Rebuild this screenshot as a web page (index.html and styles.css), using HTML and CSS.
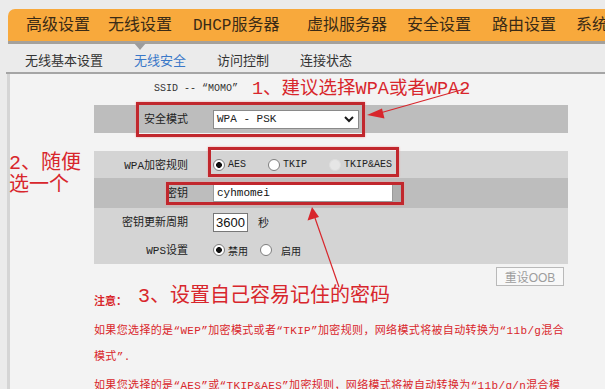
FILE: index.html
```html
<!DOCTYPE html>
<html>

<head>
  <title>无线安全</title>
  <link rel="stylesheet" href="styles.css">
</head>

<body>
 <div class="page">
  <div class="topnav">
    <span class="nav-item"><span>高级设置</span></span>
    <span class="nav-item"><span class="active">无线设置</span></span>
    <span class="nav-item"><span>DHCP服务器</span></span>
    <span class="nav-item"><span>虚拟服务器</span></span>
    <span class="nav-item"><span>安全设置</span></span>
    <span class="nav-item"><span>路由设置</span></span>
    <span class="nav-item"><span>系统工具</span></span>
  </div>
  <div class="subnav">
    <span>无线基本设置</span>
    <span class="current">无线安全</span>
    <span>访问控制</span>
    <span>连接状态</span>
  </div>

  <div class="content">
    <div class="ssid">SSID -- “MOMO”</div>
    <div class="form">
      <div class="field-row dark">
        <div class="label">安全模式</div>
        <div class="value">
          <div class="select">
            <span>WPA - PSK</span>
            <svg width="10" height="7" viewBox="0 0 10 7"><path d="M1 1 L5 5 L9 1" fill="none" stroke="#1a1a1a" stroke-width="2"/></svg>
          </div>
        </div>
      </div>
      <div class="field-row light first">
        <div class="label">WPA加密规则</div>
        <div class="value">
          <span class="radio on"><i></i>AES</span>
          <span class="radio"><i></i>TKIP</span>
          <span class="radio off"><i></i>TKIP&amp;AES</span>
        </div>
      </div>
      <div class="field-row dark tall">
        <div class="label">密钥</div>
        <div class="value">
          <input class="text-input key" type="text" value="cyhmomei" />
          <span class="key-end"></span>
        </div>
      </div>
      <div class="field-row light">
        <div class="label">密钥更新周期</div>
        <div class="value">
          <input class="text-input period" type="text" value="3600" />
          <span class="unit">秒</span>
        </div>
      </div>
      <div class="field-row light">
        <div class="label">WPS设置</div>
        <div class="value">
          <span class="radio on"><i></i>禁用</span>
          <span class="radio wps-on"><i></i>启用</span>
        </div>
      </div>
      <div class="btn-row">
        <button type="button" class="btn-oob">重设OOB</button>
      </div>
    </div>

    <div class="notice">
      <div class="notice-title">注意：</div>
      <p class="notice-text">如果您选择的是“WEP”加密模式或者“TKIP”加密规则，网络模式将被自动转换为“11b/g混合模式”.</p>
      <p class="notice-text">如果您选择的是“AES”或“TKIP&amp;AES”加密规则，网络模式将被自动转换为“11b/g/n混合模式”.</p>
    </div>
  </div>

  <!-- annotations drawn over the screenshot -->
  <div class="mark mark-mode"></div>
  <div class="mark mark-rule"></div>
  <div class="mark mark-key"></div>
  <div class="note note-1">1、建议选择WPA或者WPA2</div>
  <div class="note note-2">2、随便<br>选一个</div>
  <div class="note note-3">3、设置自己容易记住的密码</div>
  <svg class="arrows" width="605" height="389" viewBox="0 0 605 389">
    <line x1="468" y1="88" x2="380" y2="113" stroke="#d8262c" stroke-width="1.2"/>
    <polygon points="367,115 382,108.5 384.5,118.5" fill="#d8262c"/>
    <line x1="339" y1="287" x2="315" y2="218" stroke="#d8262c" stroke-width="1.2"/>
    <polygon points="312,207 307.5,220.5 319,217" fill="#d8262c"/>
  </svg>
 </div>
</body>

</html>
```

FILE: styles.css
```css
body {
    margin: 0;
    background-color: #ebebeb;
    font-family: "Liberation Mono", "Noto Sans CJK SC", monospace;
    color: #222;
}
.page {
    position: relative;
    width: 605px;
    height: 389px;
    overflow: hidden;
}
.topnav {
    display: grid;
    grid-template-columns: 82px 85px 114px 100px 85px 84px 120px;
    margin: 9px 0 0 8px;
    padding: 2px 0 0 18px;
    height: 30px;
    line-height: 30px;
    background-color: #f8a93c;
    border-bottom: 3px solid #a5a19b;
    border-radius: 7px 0 0 0;
    font-size: 16px;
    color: #3a2b16;
    white-space: nowrap;
}
.nav-item > span {
    position: relative;
    display: inline-block;
}
.nav-item > .active::after {
    content: "";
    position: absolute;
    left: 50%;
    top: 32px;
    margin-left: -6px;
    border-left: 6px solid transparent;
    border-right: 6px solid transparent;
    border-top: 7px solid #9c9c9c;
}
.subnav {
    display: flex;
    gap: 31px;
    margin-left: 6px;
    padding: 3px 0 0 19px;
    height: 25px;
    line-height: 25px;
    font-family: "Noto Sans CJK SC", sans-serif;
    font-size: 13px;
    color: #333;
    border-bottom: 2px solid #a5a5a5;
}
.subnav .current {
    color: #3a78c8;
}
.content {
    margin-left: 7px;
    height: 320px;
    padding: 7px 0 0 84px;
    background-color: #f3f3f3;
    border-left: 3px solid #d5d5d5;
}
.ssid {
    margin-left: 60px;
    height: 16px;
    line-height: 16px;
    font-size: 10px;
    color: #333;
}
.form {
    width: 474px;
    margin-top: 8px;
}
.field-row {
    display: flex;
    align-items: center;
    height: 28px;
    font-size: 11px;
}
.field-row.dark {
    background-color: #bdbdbd;
}
.field-row.light {
    background-color: #d4d4d4;
}
.field-row.first {
    margin-top: 18px;
    height: 27px;
}
.field-row.tall {
    height: 30px;
}
.field-row .label {
    width: 94px;
    text-align: right;
    padding-bottom: 2px;
}
.field-row .value {
    display: flex;
    align-items: center;
    margin-left: 25px;
}
.select {
    display: flex;
    align-items: center;
    justify-content: space-between;
    box-sizing: border-box;
    width: 146px;
    height: 19px;
    padding: 0 4px 0 3px;
    background-color: #fff;
    border: 1px solid #8a8a8a;
    font-size: 11px;
}
.text-input {
    box-sizing: border-box;
    margin: 0;
    padding: 0 3px;
    height: 18px;
    border: 1px solid #9a9a9a;
    background-color: #fff;
    outline: none;
    font-family: "Liberation Mono", monospace;
    font-size: 11px;
    color: #111;
}
.text-input.key {
    width: 180px;
}
.key-end {
    width: 8px;
    height: 18px;
    background-color: #aeaeae;
}
.text-input.period {
    width: 35px;
    height: 19px;
    padding: 0 2px;
    border-color: #777;
    font-family: "Liberation Sans", sans-serif;
    font-size: 13px;
}
.unit {
    margin-left: 10px;
    font-family: "Noto Sans CJK SC", sans-serif;
}
.radio {
    display: inline-flex;
    align-items: center;
    gap: 3px;
    margin-right: 22px;
    font-size: 10px;
}
.radio i {
    display: inline-block;
    box-sizing: border-box;
    width: 12px;
    height: 12px;
    border: 1px solid #7d7d7d;
    border-radius: 50%;
    background-color: #fff;
}
.radio.on i {
    background: radial-gradient(circle, #111 0, #111 2.6px, #fff 3.2px);
}
.radio.off i {
    border-color: #dedede;
    background-color: #e6e6e6;
}
.radio.wps-on {
    gap: 9px;
    margin-left: -10px;
}
.btn-row {
    display: flex;
    justify-content: flex-end;
    padding: 3px 4px 0 0;
}
.btn-oob {
    width: 68px;
    height: 19px;
    margin: 0;
    padding: 0;
    background-color: #f8f8f8;
    border: 1px solid #b9b9b9;
    font-family: "Liberation Sans", "Noto Sans CJK SC", sans-serif;
    font-size: 12px;
    color: #9d9d9d;
}
.notice {
    width: 490px;
    margin-top: 3px;
    color: #d9262b;
    font-size: 11px;
}
.notice-title {
    height: 26px;
    line-height: 26px;
    font-weight: bold;
}
.notice-text {
    width: 478px;
    margin: 3px 0 0 0;
    line-height: 26px;
    letter-spacing: .35px;
}

.mark {
    position: absolute;
    border: 3px solid #c1272d;
    box-shadow: 0 0 2px #f0a0a0;
}
.mark-mode {
    left: 136px;
    top: 102px;
    width: 223px;
    height: 29px;
}
.mark-rule {
    left: 208px;
    top: 147px;
    width: 185px;
    height: 24px;
}
.mark-key {
    left: 166px;
    top: 182px;
    width: 232px;
    height: 17px;
}
.note {
    position: absolute;
    color: #d8262c;
    font-family: "Liberation Mono", "Noto Sans CJK SC", monospace;
    white-space: nowrap;
}
.note-1 {
    left: 252px;
    top: 79px;
    font-size: 18.5px;
    line-height: 22px;
}
.note-2 {
    left: 9px;
    top: 153px;
    font-size: 20px;
    line-height: 22px;
}
.note-3 {
    left: 138px;
    top: 285px;
    font-size: 20px;
    line-height: 24px;
}
.arrows {
    position: absolute;
    left: 0;
    top: 0;
    pointer-events: none;
}
```
